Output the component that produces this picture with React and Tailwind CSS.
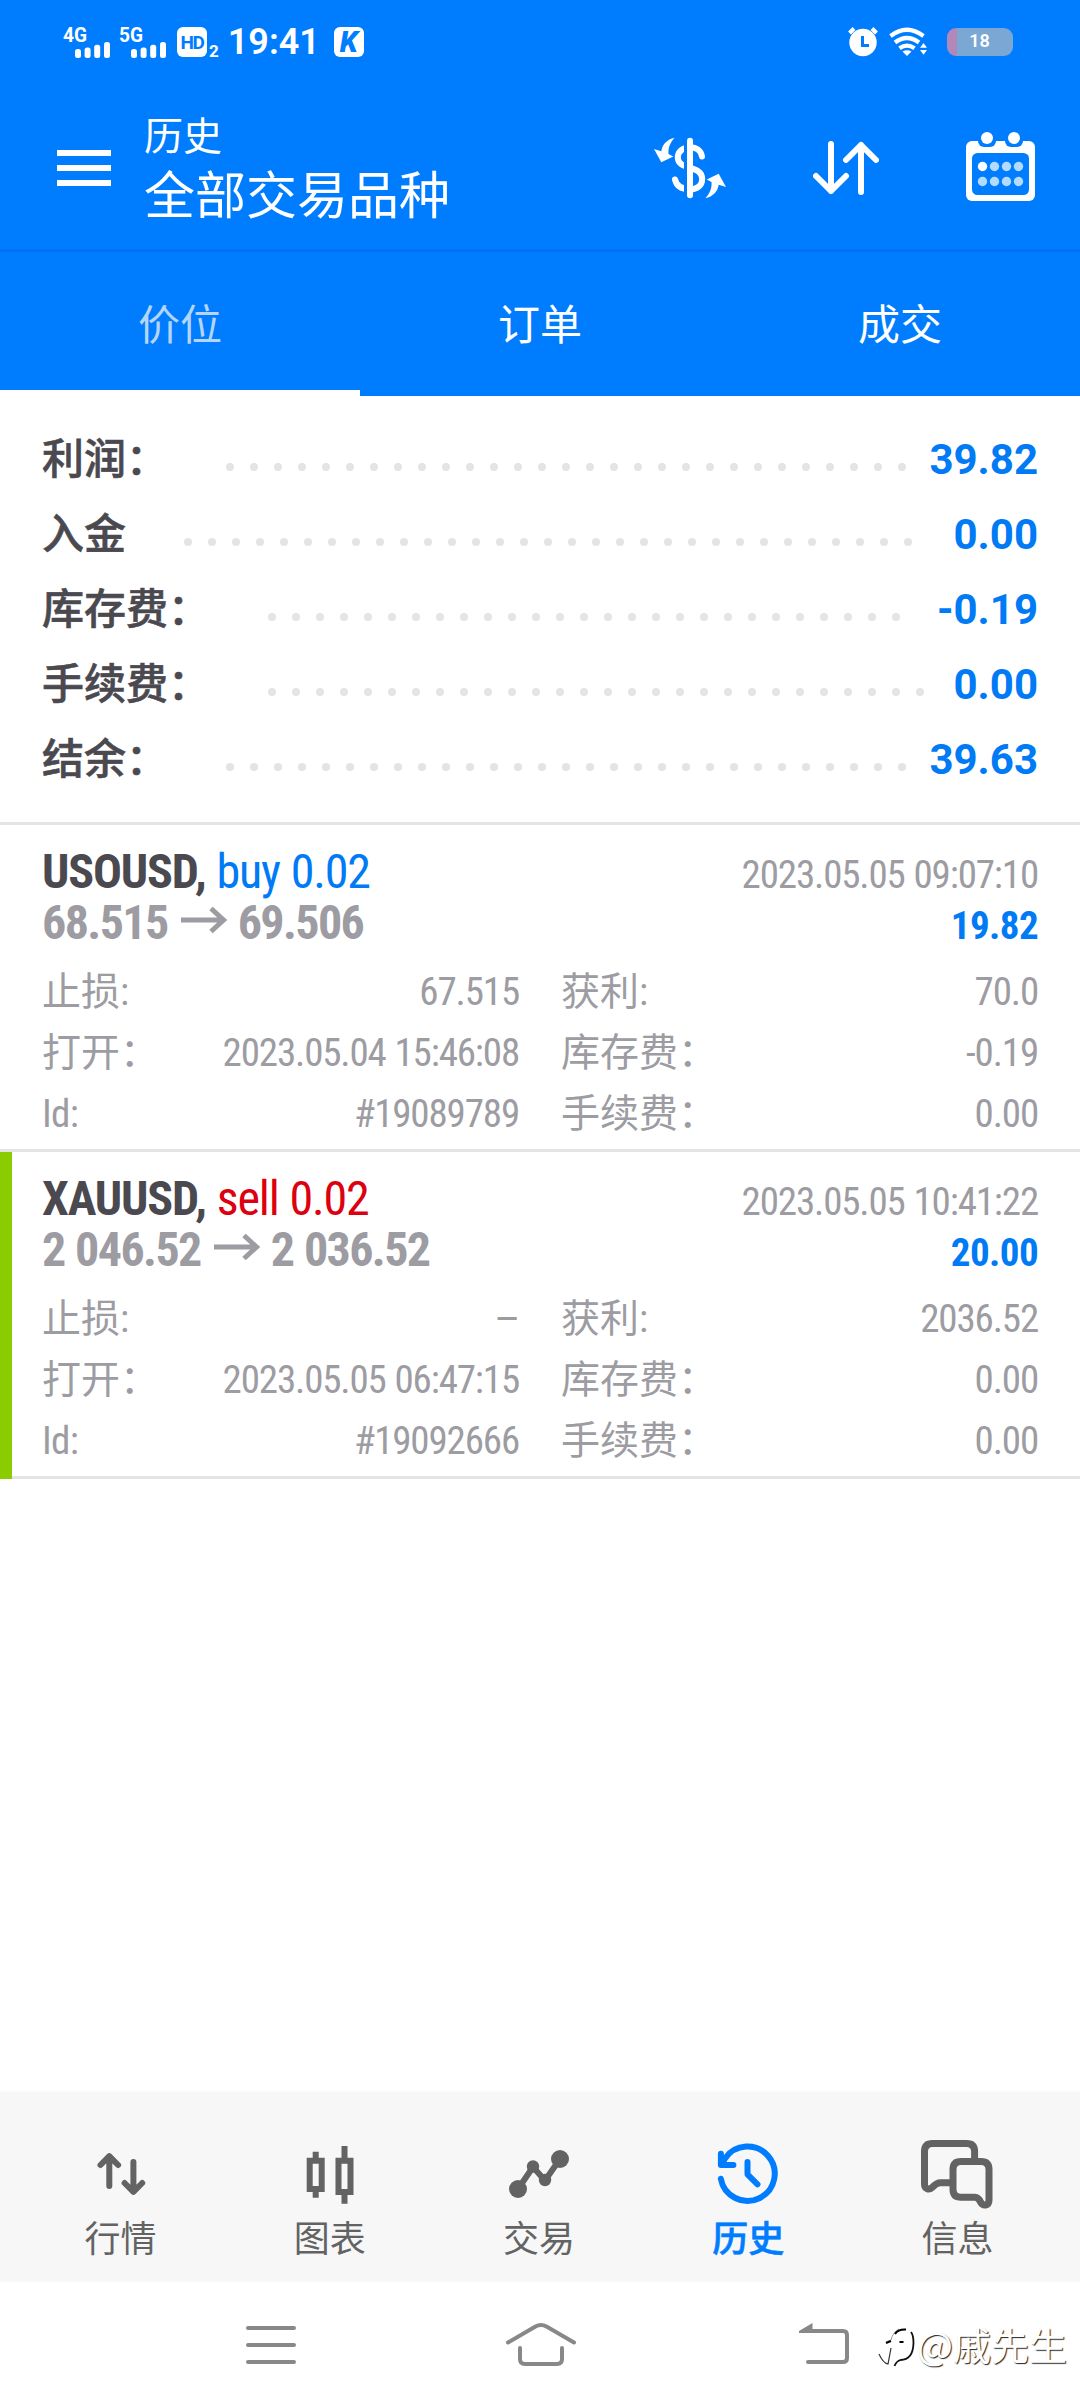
import React, { useState } from 'react';
import { clsx } from 'clsx';

const TABS = ['价位', '订单', '成交'];

const SUMMARY = [
  { label: '利润：', value: '39.82', dots: 29 },
  { label: '入金', value: '0.00', dots: 31 },
  { label: '库存费：', value: '-0.19', dots: 27 },
  { label: '手续费：', value: '0.00', dots: 28 },
  { label: '结余：', value: '39.63', dots: 29 },
];

const DEALS = [
  {
    symbol: 'USOUSD',
    side: 'buy',
    volume: '0.02',
    open: '68.515',
    close: '69.506',
    time: '2023.05.05 09:07:10',
    profit: '19.82',
    marked: false,
    rows: [
      ['止损:', '67.515', '获利:', '70.0'],
      ['打开：', '2023.05.04 15:46:08', '库存费：', '-0.19'],
      ['Id:', '#19089789', '手续费：', '0.00'],
    ],
  },
  {
    symbol: 'XAUUSD',
    side: 'sell',
    volume: '0.02',
    open: '2 046.52',
    close: '2 036.52',
    time: '2023.05.05 10:41:22',
    profit: '20.00',
    marked: true,
    rows: [
      ['止损:', '–', '获利:', '2036.52'],
      ['打开：', '2023.05.05 06:47:15', '库存费：', '0.00'],
      ['Id:', '#19092666', '手续费：', '0.00'],
    ],
  },
];

function Signal({ label }) {
  return (
    <svg width="48" height="44" viewBox="0 -6 48 44" fill="#fff">
      <text x="0" y="16" fontSize="20" fontWeight="700" textLength="24" lengthAdjust="spacingAndGlyphs">{label}</text>
      <rect x="12" y="23" width="6" height="9" rx="2.5" />
      <rect x="21.6" y="21.5" width="6" height="10.5" rx="2.5" />
      <rect x="31.2" y="18.7" width="6" height="13.3" rx="2.5" />
      <rect x="41" y="16" width="6" height="16" rx="2.5" />
    </svg>
  );
}

function StatusBar() {
  return (
    <div className="flex h-[84px] items-center text-white">
      <div className="flex items-center pl-[63px]">
        <Signal label="4G" />
        <div className="w-2" />
        <Signal label="5G" />
        <span className="ml-[10px] flex h-[30px] w-[30px] items-center justify-center rounded-[6px] bg-white text-[19px] leading-none font-bold tracking-[-1.5px] text-[#007dff]">
          HD
        </span>
        <span className="ml-[2px] pt-[18px] text-[17px] leading-none font-bold">2</span>
        <span className="ml-[9px] text-[36px] leading-none font-semibold">19:41</span>
        <span className="ml-[14px] flex h-[30px] w-[30px] items-center justify-center rounded-[6px] bg-white text-[29px] leading-none font-black text-[#007dff] italic">
          K
        </span>
      </div>
      <div className="ml-auto flex items-center pr-[67px]">
        <svg width="30" height="30" viewBox="0 0 30 30" fill="none">
          <circle cx="15" cy="15.5" r="13.7" fill="#fff" />
          <path d="M1.5 6 6 1.5M24 1.5 28.5 6" stroke="#fff" strokeWidth="4" />
          <path d="M14.5 9v9.5h6.5" stroke="#007dff" strokeWidth="3" />
        </svg>
        <svg className="ml-[11px]" width="38" height="30" viewBox="0 0 38 30" fill="none">
          <g stroke="#fff" strokeWidth="4.2">
            <path d="M1.5 9Q18-3.5 34.5 9" />
            <path d="M6 15.5Q18 6.5 30 15.5" />
            <path d="M10.5 21.3Q18 16 25.5 21.3" />
          </g>
          <path d="M13.5 24.6Q18 21.8 22.5 24.6L18 29z" fill="#fff" />
          <path d="M34.5 16l3.5 4.8h-7zM31 23h7l-3.5 4.8z" fill="#fff" />
        </svg>
        <div className="ml-[20px] flex h-[28px] w-[66px] items-center justify-center overflow-hidden rounded-[9px] bg-[linear-gradient(90deg,#b288b8_10px,#7aa7d3_10px)] pr-[1px] pb-[2px] text-[18px] leading-none font-semibold">
          18
        </div>
      </div>
    </div>
  );
}

function CurrencyIcon() {
  const arrow = 'M20.7 5.7C13 7.5 8.5 12 7.3 19.2L0 17l7.3 13.2L19.3 24.5 14.5 22C14 16 16 10.5 20.7 5.7z';
  return (
    <svg width="72" height="72" viewBox="0 0 72 72" fill="none">
      <path d={arrow} fill="#fff" />
      <path d={arrow} fill="#fff" transform="rotate(180 36 36)" />
      <path
        d="M48 24.5C47 18.5 42.5 15.3 36 15.3 29 15.3 23.8 19.5 23.8 25.5 23.8 38.5 48.2 32.5 48.2 47 48.2 53.5 43 57.3 36 57.3 27.5 57.3 22.5 54 21 47.5"
        stroke="#fff"
        strokeWidth="6"
        strokeLinecap="round"
      />
      <path d="M31.5 5v62" stroke="#007dff" strokeWidth="3" />
      <path d="M36 8.7v54.6" stroke="#fff" strokeWidth="6" strokeLinecap="round" />
    </svg>
  );
}

function SortIcon() {
  return (
    <svg width="66" height="54" viewBox="0 0 66 54" fill="none" stroke="#fff" strokeWidth="6" strokeLinecap="round" strokeLinejoin="round">
      <path d="M18 3v47M3 35l15 15 15-15M48 51V4M33 19 48 4l15 15" />
    </svg>
  );
}

function CalendarIcon() {
  return (
    <svg width="69" height="69" viewBox="0 0 69 69">
      <rect y="9" width="69" height="60" rx="6" fill="#fff" />
      <rect x="12" y="-6" width="18" height="21" rx="6" fill="#007dff" />
      <rect x="39" y="-6" width="18" height="21" rx="6" fill="#007dff" />
      <circle cx="21" cy="6" r="6" fill="#fff" />
      <circle cx="48" cy="6" r="6" fill="#fff" />
      <rect x="6" y="21" width="57" height="42" rx="5.5" fill="#007dff" />
      {[34.5, 49.5].map((y, r) =>
        [16.5, 28.5, 40.5, 52.5].map((x, c) => (
          <circle key={`${r}-${c}`} cx={x} cy={y} r="4.7" fill={r + c === 0 ? '#fff' : '#b3dbff'} />
        ))
      )}
    </svg>
  );
}

function Header() {
  return (
    <header className="box-content flex h-[165px] border-b-[3px] border-[#0072f2] text-white">
      <button className="mt-[66px] ml-[57px] flex h-[36px] w-[54px] flex-col justify-between" aria-label="menu">
        <span className="h-[6px] w-full bg-white" />
        <span className="h-[6px] w-full bg-white" />
        <span className="h-[6px] w-full bg-white" />
      </button>
      <div className="ml-[33px] pt-[28px]">
        <p className="text-[39px] leading-[50px]">历史</p>
        <h1 className="text-[51px] leading-[70px]">全部交易品种</h1>
      </div>
      <div className="ml-auto flex h-[168px] items-center gap-[87px] pr-[45px]">
        <CurrencyIcon />
        <SortIcon />
        <div className="pb-[3px]"><CalendarIcon /></div>
      </div>
    </header>
  );
}

function Summary() {
  return (
    <section className="px-[42px] pt-[26px] pb-[25px]">
      {SUMMARY.map(row => (
        <div key={row.label} className="flex h-[75px] items-center text-[42px] leading-[75px]">
          <span className="font-medium text-[#4a494f] [-webkit-text-stroke:0.6px_#4a494f]">{row.label}</span>
          <span className="ml-[58px] flex gap-4 pt-[15px]">
            {Array.from({ length: row.dots }, (_, i) => (
              <i key={i} className="h-2 w-2 rounded-full bg-[#e4e4e4]" />
            ))}
          </span>
          <span className="ml-auto font-bold text-[#007af5]">{row.value}</span>
        </div>
      ))}
    </section>
  );
}

function Cell({ label, value }) {
  return (
    <div className="flex justify-between">
      <span className={clsx(label === 'Id:' && 'tracking-[-0.7px]')}>{label}</span>
      <span className={clsx('tracking-[-1.15px] [word-spacing:1px]', value === '–' && '[font-stretch:100%]')}>{value}</span>
    </div>
  );
}

function Deal({ deal }) {
  return (
    <article className="flex h-[327px]">
      {deal.marked && <div className="w-[12px] shrink-0 bg-[#8acc00]" />}
      <div
        className={clsx(
          'min-w-0 flex-1 border-b-[3px] border-[#e4e4e4] pt-[21px] pr-[42px] text-[39px] whitespace-nowrap text-[#9c9ca2] [font-stretch:75%]',
          deal.marked ? 'pl-[30px]' : 'pl-[42px]'
        )}
      >
        <div className="flex h-[51px] items-baseline justify-between leading-[51px] tracking-[-1.15px] [word-spacing:1px]">
          <span className="text-[48px]">
            <b className="font-bold text-[#4a494f]">{deal.symbol},</b>{' '}
            <span className={deal.side === 'buy' ? 'text-[#007af5]' : 'text-[#dc0010]'}>
              {deal.side} {deal.volume}
            </span>
          </span>
          <span>{deal.time}</span>
        </div>
        <div className="flex h-[51px] items-baseline justify-between leading-[51px] font-bold tracking-[-0.6px]">
          <span className="flex items-baseline text-[48px] tracking-[-1.6px] [word-spacing:1px]">
            {deal.open}
            <svg className="mr-[11px] ml-[13px]" width="46" height="32" viewBox="0 0 46 32" fill="none" stroke="#9c9ca2" strokeWidth="5">
              <path d="M0 13h42M30 1.5 42.5 13 30 24.5" />
            </svg>
            {deal.close}
          </span>
          <span className="text-[#007af5]">{deal.profit}</span>
        </div>
        <div className="mt-[14px] grid grid-cols-2 gap-x-[42px] leading-[61px]">
          {deal.rows.map(([l1, v1, l2, v2]) => (
            <React.Fragment key={l1}>
              <Cell label={l1} value={v1} />
              <Cell label={l2} value={v2} />
            </React.Fragment>
          ))}
        </div>
      </div>
    </article>
  );
}

// every glyph lives in a 72x72 box and inherits the text colour
const NAV = [
  {
    label: '行情',
    icon: <path d="M24.3 48V19M15.5 27l8.8-8.8 8.8 8.8M48.4 24v29M39.6 45l8.8 8.8L57.2 45" strokeWidth="6" />,
  },
  {
    label: '图表',
    icon: (
      <g strokeLinecap="butt" strokeLinejoin="miter" strokeWidth="6">
        <path d="M15.7 22.7h12v28.3h-12zM44.5 22.7h12v31.3h-12z" />
        <path d="M21.7 13.7v7M21.7 53v6.7M50.5 8v13M50.5 56v9.7" />
      </g>
    ),
  },
  {
    label: '交易',
    icon: (
      <g strokeWidth="6">
        <path d="M15 51 30 29l12 13.5L57 21" />
        <g fill="currentColor" stroke="none">
          <circle cx="15" cy="51" r="9" />
          <circle cx="30" cy="28.5" r="6.2" />
          <circle cx="42" cy="42" r="6.2" />
          <circle cx="57" cy="21" r="9" />
        </g>
      </g>
    ),
  },
  {
    label: '历史',
    icon: (
      <path d="M8.8 40.7A27.2 27.2 0 1 0 13 20.5L9.5 26.5M8.9 15.7V27h12.5M35.5 24v12.3l10 10" strokeWidth="6" />
    ),
  },
  {
    label: '信息',
    icon: (
      <g strokeWidth="7">
        <path d="M53.6 21v-7.5q0-8-8-8H11.5q-8 0-8 8V46c0 5 4.5 6.5 8 3.2q4-4.5 8-4.5H30" strokeLinecap="butt" />
        <path d="M40 23.5h20q8 0 8 8V62c0 6-6 6.5-8.5 2q-2.2-4.7-5.5-4.7H40q-8 0-8-8V31.500q0-8 8-8z" />
      </g>
    ),
  },
];

function BottomNav() {
  const [active, setActive] = useState('历史');
  return (
    <nav className="mt-auto grid h-[190px] grid-cols-5 bg-[#f7f7f7] pr-[18px] pl-[16px] shadow-[0_0_4px_#f4f4f4]">
      {NAV.map(({ label, icon }) => (
        <button
          key={label}
          onClick={() => setActive(label)}
          className={clsx(
            'flex flex-col items-center pt-[46px] text-[36px] leading-[60px]',
            active === label ? 'font-medium text-[#007dff] [-webkit-text-stroke:0.6px_#007dff]' : 'text-[#636363]'
          )}
        >
          <svg width="72" height="72" viewBox="0 0 72 72" fill="none" stroke="currentColor" strokeLinecap="round" strokeLinejoin="round">
            {icon}
          </svg>
          {label}
        </button>
      ))}
    </nav>
  );
}

function SystemBar() {
  return (
    <div className="flex h-[126px] shrink-0 items-start bg-white pt-[40px] text-[#888]">
      <svg className="ml-[246px]" width="50" height="44" viewBox="0 0 50 44" stroke="currentColor" strokeWidth="4" strokeLinecap="round">
        <path d="M2 6h46M2 23h46M2 40h46" />
      </svg>
      <svg className="ml-[210px]" width="70" height="46" viewBox="0 0 70 46" fill="none" stroke="currentColor" strokeWidth="4" strokeLinecap="round" strokeLinejoin="round">
        <path d="M2 20.5 29.5 4.5Q35 1.5 40.5 4.5L68 20.5M14 26v11q0 5 5 5h32q5 0 5-5V26" />
      </svg>
      <svg className="ml-[222px]" width="52" height="44" viewBox="0 0 52 44" fill="none" stroke="currentColor" strokeWidth="4" strokeLinecap="round">
        <path d="M14 9h31q4 0 4 4v23q0 4-4 4H10" />
        <path d="M1 9 14.5 1v10H1z" fill="currentColor" stroke="none" />
      </svg>
      <div className="ml-[28px] flex items-start text-[38px] leading-[44px] whitespace-nowrap text-white [font-family:'Noto_Sans_CJK_SC',sans-serif] [text-shadow:1px_1px_1px_#222]">
        <svg className="mt-[2px]" width="39" height="48" viewBox="0 0 39 48" fill="none">
          <path d="M1 30q4 9 9 10l3-16" stroke="#333" strokeWidth="1.2" />
          <path d="M8 18l5-2q2-8 8-11" stroke="#999" strokeWidth="1" />
          <path d="M17 10q3-5 11-4.500M8 19l5-2M21.500 18h4" stroke="#000" strokeWidth="2" />
          <path d="M33 8q2.500 3 2.500 11-.500 17-13 17-4 1-6 6" stroke="#111" strokeWidth="1.800" />
        </svg>
        @戚先生
      </div>
    </div>
  );
}

export default function App() {
  const [tab, setTab] = useState(0);
  return (
    <div className="flex h-[2408px] w-[1080px] flex-col overflow-hidden bg-white [font-family:Roboto,'Noto_Sans_CJK_SC',sans-serif]">
      <div className="bg-[#007dff]">
        <StatusBar />
        <Header />
        <div className="grid h-[144px] grid-cols-3 text-[42px] text-white">
          {TABS.map((name, i) => (
            <button
              key={name}
              onClick={() => setTab(i)}
              className={clsx('border-b-[6px] pt-[9px]', tab === i ? 'border-white text-[#b5d5f8]' : 'border-transparent')}
            >
              {name}
            </button>
          ))}
        </div>
      </div>
      <Summary />
      <div className="border-t-[3px] border-[#e4e4e4]">
        {DEALS.map(deal => (
          <Deal key={deal.symbol} deal={deal} />
        ))}
      </div>
      <BottomNav />
      <SystemBar />
    </div>
  );
}
